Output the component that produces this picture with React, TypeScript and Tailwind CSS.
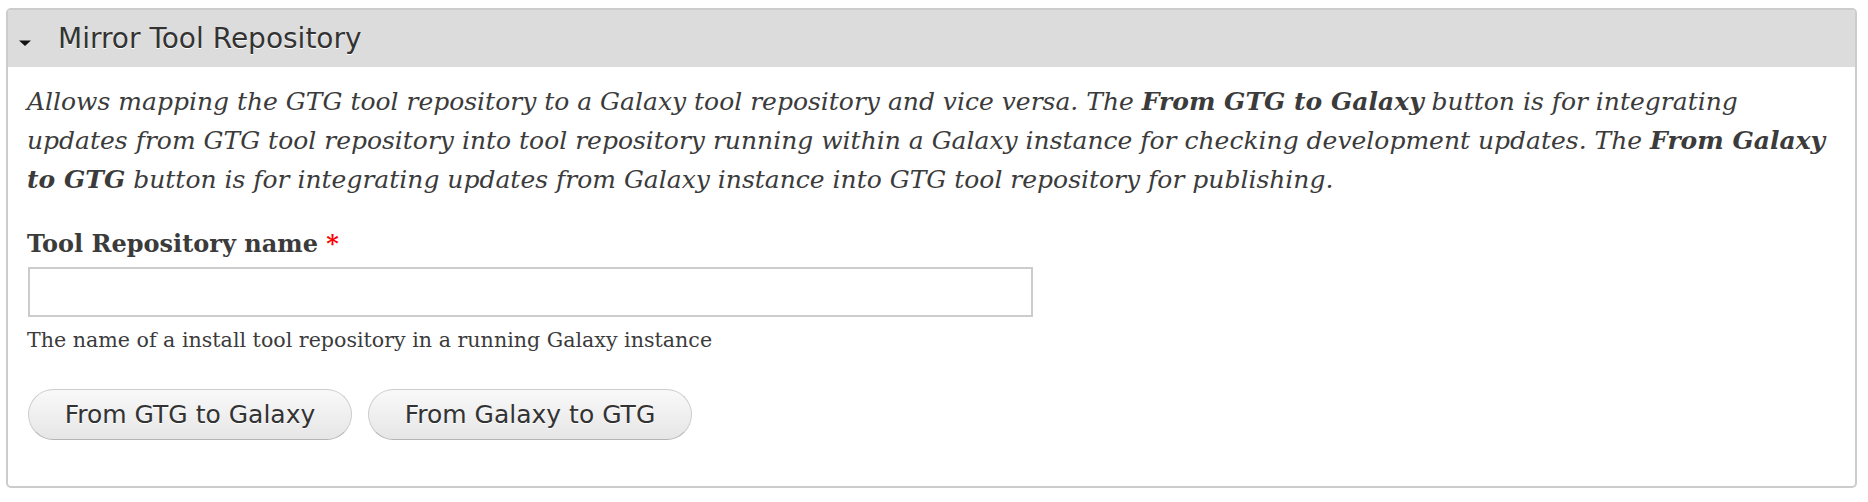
export default function App() {
  return (
    <div className="min-h-[502px] bg-white pt-[8px] pl-[6px] pr-[11px]">
      {/* Fieldset */}
      <div className="rounded-[5px] border-2 border-[#cccccc] overflow-hidden">
        {/* Legend / header */}
        <div className="h-[57px] bg-[#dcdcdc] flex items-center pl-[10px] font-['DejaVu_Sans',sans-serif] text-[#333333]">
          <svg width="14" height="8" viewBox="0 0 14 8" className="mt-[8px]">
            <path d="M1 1.5 L13 1.5 L7 7 Z" fill="#111111" />
          </svg>
          <span className="ml-[26px] text-[28px] [text-shadow:0_1px_0_#ffffff]">Mirror Tool Repository</span>
        </div>

        {/* Body */}
        <div className="pl-[19px] pr-[16px] pt-[15px] pb-[46px] text-[#3b3b3b] font-['DejaVu_Serif',serif]">
          <p className="italic text-[25px] leading-[39px] whitespace-nowrap">
            Allows mapping the GTG tool repository to a Galaxy tool repository and vice versa. The <b>From GTG to Galaxy</b> button is for integrating
            <br />
            updates from GTG tool repository into tool repository running within a Galaxy instance for checking development updates. The <b>From Galaxy</b>
            <br />
            <b>to GTG</b> button is for integrating updates from Galaxy instance into GTG tool repository for publishing.
          </p>

          <label className="block mt-[30px] text-[24px] leading-[30px] font-bold">
            Tool Repository name <span className="text-[#ff0000]">*</span>
          </label>
          <input
            type="text"
            className="block mt-[8px] ml-[1px] w-[1005px] h-[50px] border-2 border-[#cccccc] bg-white outline-none px-2 text-[20px]"
          />
          <p className="mt-[10px] text-[20.6px] leading-[26px]">
            The name of a install tool repository in a running Galaxy instance
          </p>

          <div className="flex gap-[16px] mt-[36px] ml-[1px] font-['DejaVu_Sans',sans-serif]">
            <button className="w-[324px] h-[51px] rounded-full border border-[#cccccc] border-b-[#b4b4b4] bg-gradient-to-b from-[#f9f9f9] to-[#e6e6e6] text-[25px] text-[#333333] [text-shadow:0_1px_0_#ffffff]">
              From GTG to Galaxy
            </button>
            <button className="w-[324px] h-[51px] rounded-full border border-[#cccccc] border-b-[#b4b4b4] bg-gradient-to-b from-[#f9f9f9] to-[#e6e6e6] text-[25px] text-[#333333] [text-shadow:0_1px_0_#ffffff]">
              From Galaxy to GTG
            </button>
          </div>
        </div>
      </div>
    </div>
  )
}
